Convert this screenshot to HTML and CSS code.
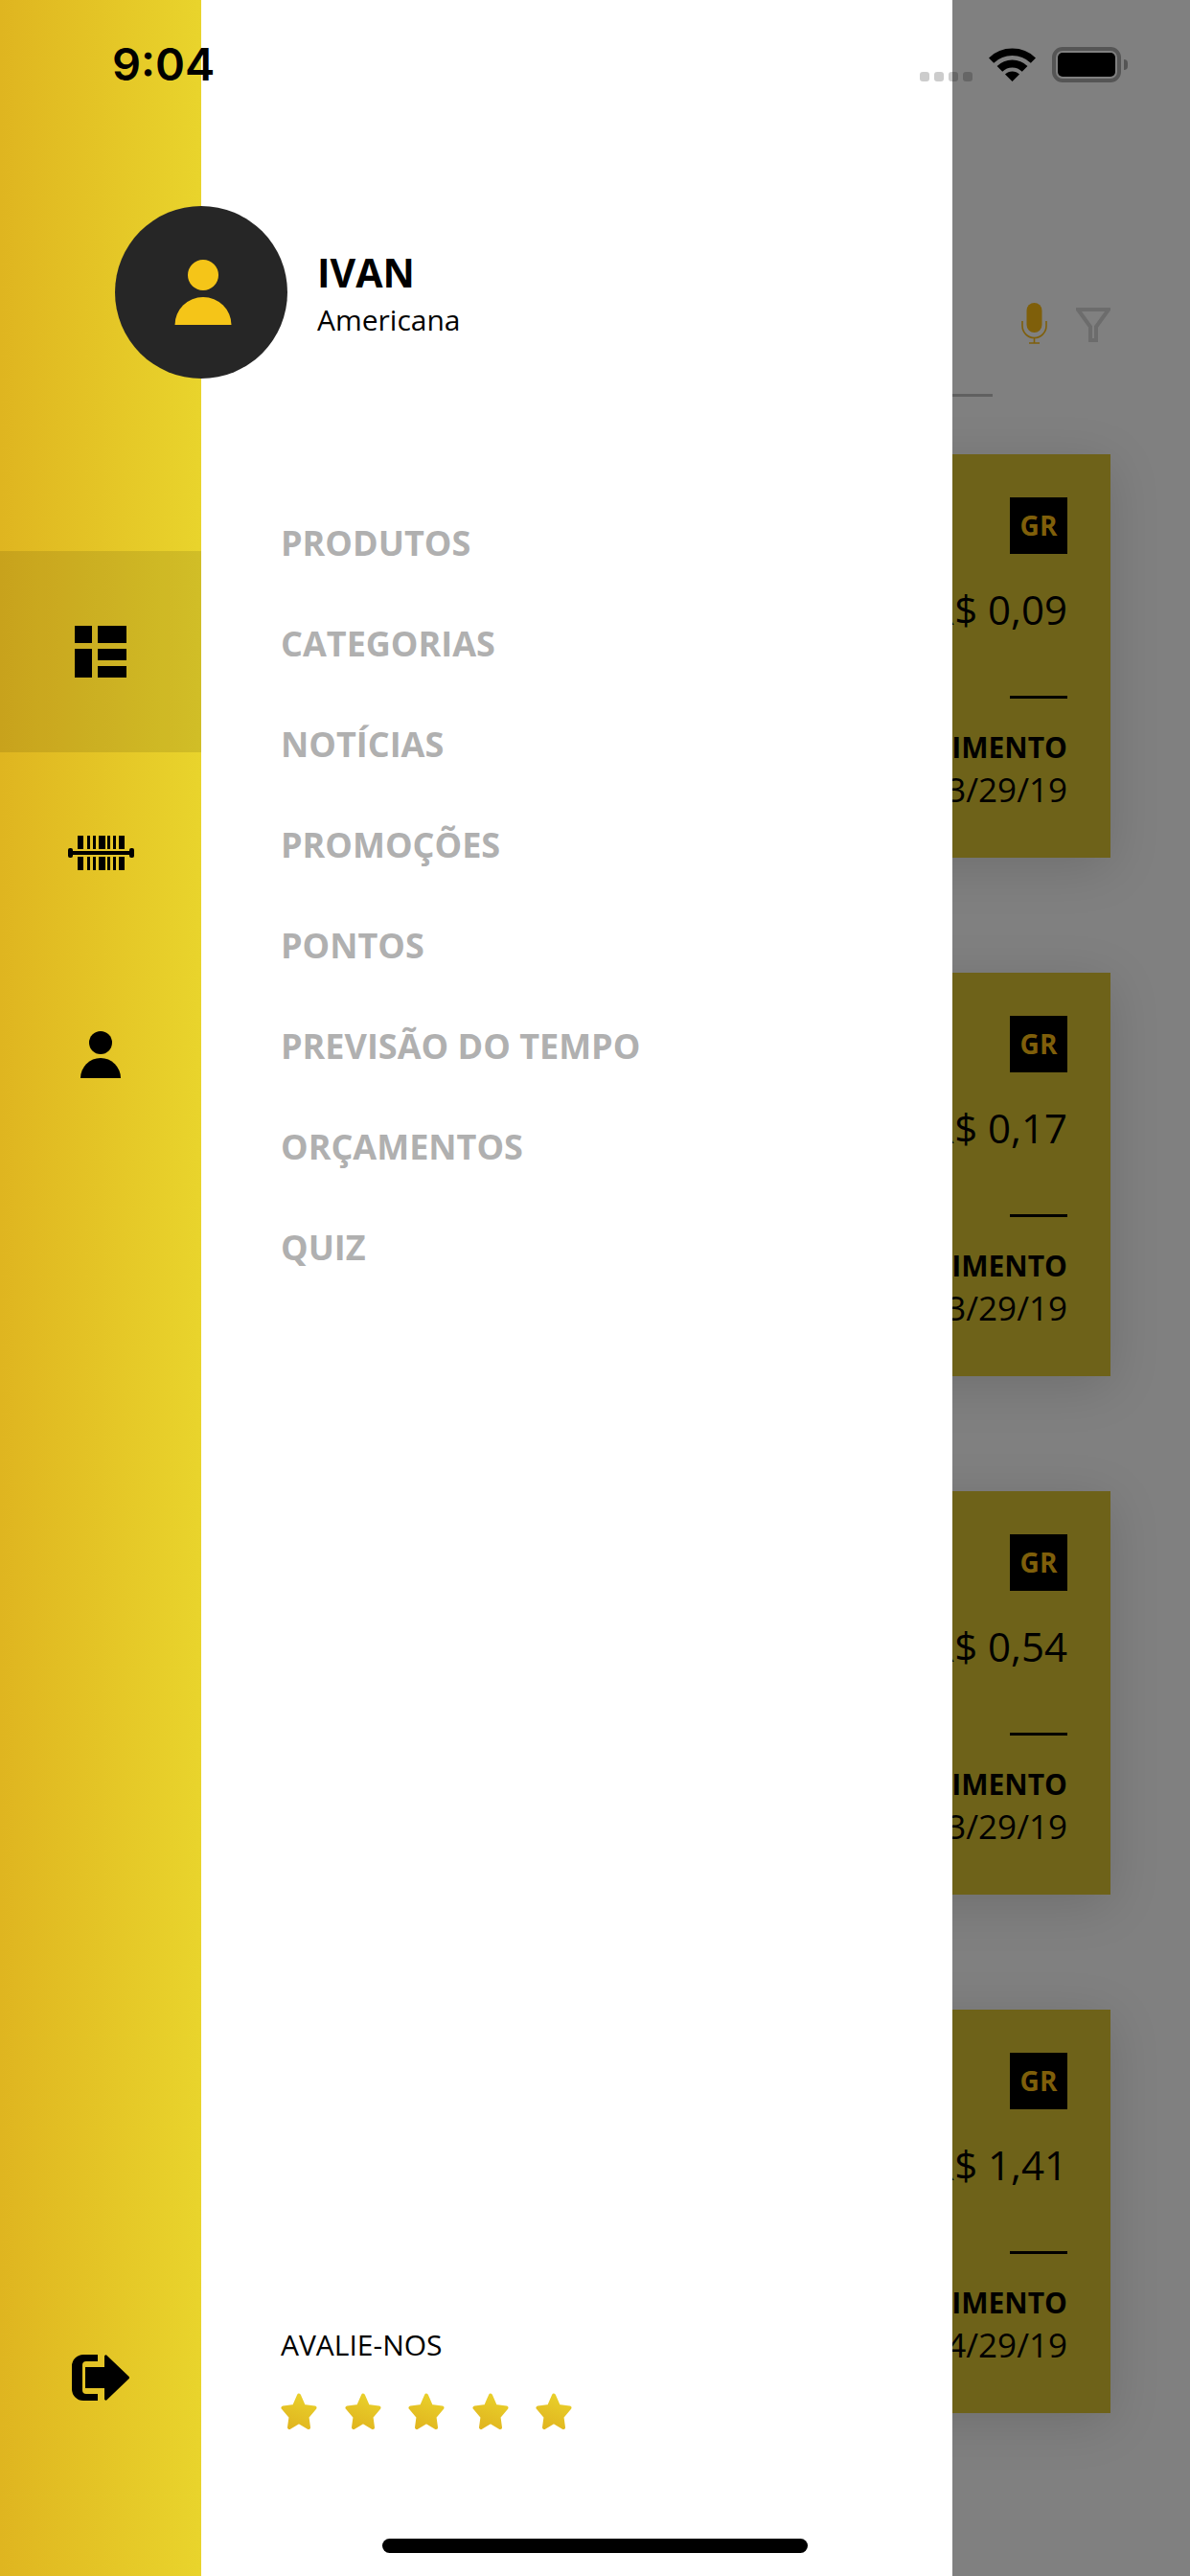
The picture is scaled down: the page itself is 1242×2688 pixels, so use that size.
FILE: index.html
```html
<!DOCTYPE html>
<html lang="pt-BR">

<head>
    <meta charset="UTF-8">
    <meta name="viewport" content="width=device-width, initial-scale=1.0">
    <title>Menu</title>
    <link rel="stylesheet" href="styles.css">
</head>

<body>
    <div class="app">
        <!-- barra lateral amarela -->
        <div class="side">
            <ul class="side-nav">
                <li class="current">
                    <svg width="54" height="54" viewBox="0 0 54 54">
                        <rect x="0" y="0" width="18" height="18" />
                        <rect x="24" y="0" width="30" height="18" />
                        <rect x="0" y="24" width="18" height="30" />
                        <rect x="24" y="24" width="30" height="12" />
                        <rect x="24" y="42" width="30" height="12" />
                    </svg>
                </li>
                <li>
                    <svg width="69" height="36" viewBox="0 0 69 36">
                        <path d="M10 0h6v14h-6zM20 0h3v14h-3zM26 0h3v14h-3zM32 0h7v14h-7zM41 0h3v14h-3zM47 0h3v14h-3zM53 0h6v14h-6z" />
                        <path d="M10 22h6v14h-6zM20 22h3v14h-3zM26 22h3v14h-3zM32 22h7v14h-7zM41 22h3v14h-3zM47 22h3v14h-3zM53 22h6v14h-6z" />
                        <rect x="2" y="16" width="65" height="4" />
                        <rect x="0" y="13" width="5" height="10" rx="2" />
                        <rect x="64" y="13" width="5" height="10" rx="2" />
                    </svg>
                </li>
                <li>
                    <svg width="42" height="49" viewBox="0 0 42 49">
                        <circle cx="21" cy="12" r="12" />
                        <path d="M0 49a21 21 0 0 1 42 0z" />
                    </svg>
                </li>
            </ul>
            <a href="#" class="logout">
                <svg width="60" height="48" viewBox="0 0 60 48">
                    <path d="M27 0v7h-12a4 4 0 0 0-4 4v26a4 4 0 0 0 4 4h12v7h-15a12 12 0 0 1-12-12v-24a12 12 0 0 1 12-12z" />
                    <path d="M14 13h20v-11a1.500 1.500 0 0 1 2.700-1l23 22a1.500 1.500 0 0 1 0 2l-23 22a1.500 1.500 0 0 1-2.700-1v-11h-20z" />
                </svg>
            </a>
        </div>

        <!-- menu -->
        <div class="drawer">
            <div class="profile">
                <div class="avatar">
                    <svg width="60" height="68" viewBox="0 0 60 68">
                        <circle cx="30" cy="16" r="16" />
                        <path d="M0.500 68a29.500 29 0 0 1 59 0z" />
                    </svg>
                </div>
                <div class="profile-text">
                    <h2>IVAN</h2>
                    <p>Americana</p>
                </div>
            </div>
            <ul class="menu">
                <li><a href="#">PRODUTOS</a></li>
                <li><a href="#">CATEGORIAS</a></li>
                <li><a href="#">NOTÍCIAS</a></li>
                <li><a href="#">PROMOÇÕES</a></li>
                <li><a href="#">PONTOS</a></li>
                <li><a href="#">PREVISÃO DO TEMPO</a></li>
                <li><a href="#">ORÇAMENTOS</a></li>
                <li><a href="#">QUIZ</a></li>
            </ul>
            <div class="rate">
                <p>AVALIE-NOS</p>
                <div class="stars">
                    <svg width="38" height="38" viewBox="0 0 38 38"><defs><linearGradient id="star" x1="0.7" y1="0" x2="0.3" y2="1"><stop offset="0" stop-color="#e9d02b" /><stop offset="1" stop-color="#e1b61f" /></linearGradient></defs><path class="star" d="M19 2.500l5 11.500 11.500 1.500-8 9.500 1.500 11-10-6-10 6 1.500-11-8-9.500 11.500-1.500z" /></svg>
                    <svg width="38" height="38" viewBox="0 0 38 38"><path class="star" d="M19 2.500l5 11.500 11.500 1.500-8 9.500 1.500 11-10-6-10 6 1.500-11-8-9.500 11.500-1.500z" /></svg>
                    <svg width="38" height="38" viewBox="0 0 38 38"><path class="star" d="M19 2.500l5 11.500 11.500 1.500-8 9.500 1.500 11-10-6-10 6 1.500-11-8-9.500 11.500-1.500z" /></svg>
                    <svg width="38" height="38" viewBox="0 0 38 38"><path class="star" d="M19 2.500l5 11.500 11.500 1.500-8 9.500 1.500 11-10-6-10 6 1.500-11-8-9.500 11.500-1.500z" /></svg>
                    <svg width="38" height="38" viewBox="0 0 38 38"><path class="star" d="M19 2.500l5 11.500 11.500 1.500-8 9.500 1.500 11-10-6-10 6 1.500-11-8-9.500 11.500-1.500z" /></svg>
                </div>
            </div>
        </div>

        <!-- tela atrás do menu, escurecida -->
        <div class="behind">
            <div class="tools">
                <svg class="mic" width="27" height="43" viewBox="0 0 27 43">
                    <rect x="5.500" y="0" width="16" height="31" rx="8" fill="#7f5f0a" />
                    <path d="M1 19v5a12.500 12.500 0 0 0 25 0v-5M13.500 36.500v5M8 42h11" fill="none" stroke="#7f5f0a" stroke-width="1.600" />
                </svg>
                <svg class="funnel" width="36" height="36" viewBox="0 0 36 36">
                    <path d="M2 2h32l-13 18v14h-6v-14z" fill="none" stroke="#6c6c6c" stroke-width="4" />
                </svg>
            </div>
            <div class="search-line"></div>
            <div class="card">
                <div class="tag">GR</div>
                <div class="price">R$ 0,09</div>
                <div class="sep"></div>
                <div class="label">VENCIMENTO</div>
                <div class="date">03/29/19</div>
            </div>
            <div class="card">
                <div class="tag">GR</div>
                <div class="price">R$ 0,17</div>
                <div class="sep"></div>
                <div class="label">VENCIMENTO</div>
                <div class="date">03/29/19</div>
            </div>
            <div class="card">
                <div class="tag">GR</div>
                <div class="price">R$ 0,54</div>
                <div class="sep"></div>
                <div class="label">VENCIMENTO</div>
                <div class="date">03/29/19</div>
            </div>
            <div class="card">
                <div class="tag">GR</div>
                <div class="price">R$ 1,41</div>
                <div class="sep"></div>
                <div class="label">VENCIMENTO</div>
                <div class="date">04/29/19</div>
            </div>
        </div>

        <!-- barra de status -->
        <div class="status">
            <span class="time">9:04</span>
            <div class="status-icons">
                <div class="dots"><i></i><i></i><i></i><i></i></div>
                <svg class="wifi" width="49" height="36" viewBox="0 0 49 36">
                    <path d="M24.500 36l-7.500-7.500a10.600 10.600 0 0 1 15 0z" />
                    <path d="M11.400 22.900a18.500 18.500 0 0 1 26.200 0" fill="none" stroke="#000" stroke-width="8" />
                    <path d="M2.600 14.100a31.700 31.700 0 0 1 43.800 0" fill="none" stroke="#000" stroke-width="7.500" />
                </svg>
                <div class="battery">
                    <div class="battery-body"><div class="battery-fill"></div></div>
                    <div class="battery-nub"></div>
                </div>
            </div>
        </div>

        <div class="home-bar"></div>
    </div>
</body>

</html>
```

FILE: styles.css
```css
* {
    margin: 0;
    padding: 0;
    box-sizing: border-box;
}

li {
    list-style: none;
}

a {
    text-decoration: none;
}

body {
    font-family: 'Open Sans', 'Liberation Sans', sans-serif;
    color: #000;
}

.app {
    position: relative;
    display: flex;
    width: 1242px;
    height: 2688px;
    overflow: hidden;
}

/* barra lateral */

.side {
    display: flex;
    flex-direction: column;
    flex: none;
    width: 210px;
    padding-top: 575px;
    padding-bottom: 183px;
    background: linear-gradient(90deg, #dfb520, #e9d42c);
}

.side-nav li {
    display: flex;
    align-items: center;
    justify-content: center;
    height: 210px;
}

.side-nav li.current {
    background-color: rgba(0, 0, 0, .1);
}

.side-nav svg,
.logout svg {
    display: block;
    fill: #000;
}

.logout {
    display: flex;
    justify-content: center;
    margin-top: auto;
}

/* menu */

.drawer {
    display: flex;
    flex-direction: column;
    flex: none;
    width: 784px;
    padding: 215px 0 153px 83px;
    background-color: #fff;
}

.profile {
    display: flex;
    align-items: center;
    margin-left: -173px;
}

.avatar {
    display: flex;
    align-items: center;
    justify-content: center;
    flex: none;
    width: 180px;
    height: 180px;
    padding-left: 3px;
    border-radius: 50%;
    background-color: #262626;
}

.avatar svg {
    fill: #f5c518;
}

.profile-text {
    margin-left: 31px;
    margin-top: 2px;
}

.profile-text h2 {
    font-size: 41px;
    line-height: 50px;
    font-weight: 700;
}

.profile-text p {
    margin-top: 5px;
    font-size: 30px;
    line-height: 40px;
}

.menu {
    flex: 1;
    margin-top: 119px;
}

.menu li {
    height: 105px;
    line-height: 105px;
    font-size: 36px;
    font-weight: 700;
}

.menu a {
    color: #b0b0b0;
}

.rate p {
    font-size: 30px;
    line-height: 41px;
}

.stars {
    display: flex;
    gap: 28.500px;
    margin-top: 30px;
}

.star {
    fill: url(#star);
    stroke: url(#star);
    stroke-width: 4;
    stroke-linejoin: round;
}

/* tela de trás */

.behind {
    display: flex;
    flex-direction: column;
    align-items: flex-end;
    flex: 1;
    min-width: 0;
    padding: 316px 83px 0 0;
    background-color: #808080;
    overflow: hidden;
}

.tools {
    display: flex;
    align-items: flex-start;
    gap: 30px;
}

.funnel {
    margin-top: 5px;
}

.search-line {
    align-self: flex-start;
    width: 42px;
    height: 3px;
    margin-top: 52px;
    background-color: #606060;
}

.card {
    display: flex;
    flex-direction: column;
    align-items: flex-end;
    flex: none;
    width: 420px;
    height: 421px;
    margin-top: 60px;
    margin-bottom: 60px;
    padding: 45px 45px 0 0;
    background-color: #6e6219;
    box-shadow: 0 10px 50px rgba(0, 0, 0, .14);
}

.tag {
    width: 60px;
    height: 59px;
    line-height: 59px;
    text-align: center;
    font-size: 28px;
    font-weight: 700;
    color: #7f5f0a;
    background-color: #000;
}

.price {
    margin-top: 31px;
    font-size: 42px;
    line-height: 54px;
    white-space: nowrap;
}

.sep {
    width: 60px;
    height: 3px;
    margin-top: 63px;
    background-color: #000;
}

.label {
    margin-top: 31px;
    font-size: 30px;
    line-height: 40px;
    font-weight: 700;
    white-space: nowrap;
}

.date {
    margin-top: 1px;
    font-size: 35px;
    line-height: 46px;
    white-space: nowrap;
}

/* barra de status, por cima de tudo */

.status {
    position: absolute;
    top: 0;
    left: 0;
    display: flex;
    align-items: flex-start;
    width: 100%;
    padding: 0 65px 0 117px;
}

.time {
    margin-top: 37px;
    font-family: 'Inter', 'Liberation Sans', sans-serif;
    font-size: 47px;
    line-height: 60px;
    font-weight: 600;
}

.status-icons {
    display: flex;
    align-items: flex-end;
    gap: 17px;
    margin-left: auto;
    padding-top: 49px;
}

.dots {
    display: flex;
    gap: 5px;
    margin-bottom: 1px;
}

.dots i {
    display: block;
    width: 10px;
    height: 10px;
    border-radius: 3px;
    background-color: rgba(0, 0, 0, .2);
}

.wifi {
    display: block;
    margin-bottom: 1px;
}

.battery {
    display: flex;
    align-items: center;
    gap: 3px;
}

.battery-body {
    width: 72px;
    height: 37px;
    padding: 2px;
    border: 4px solid #555;
    border-radius: 11px;
}

.battery-fill {
    height: 100%;
    border-radius: 5px;
    background-color: #000;
}

.battery-nub {
    width: 4px;
    height: 11px;
    border-radius: 0 4px 4px 0;
    background-color: #555;
}

.home-bar {
    position: absolute;
    left: 399px;
    top: 2649px;
    width: 444px;
    height: 15px;
    border-radius: 8px;
    background-color: #000;
}
```
